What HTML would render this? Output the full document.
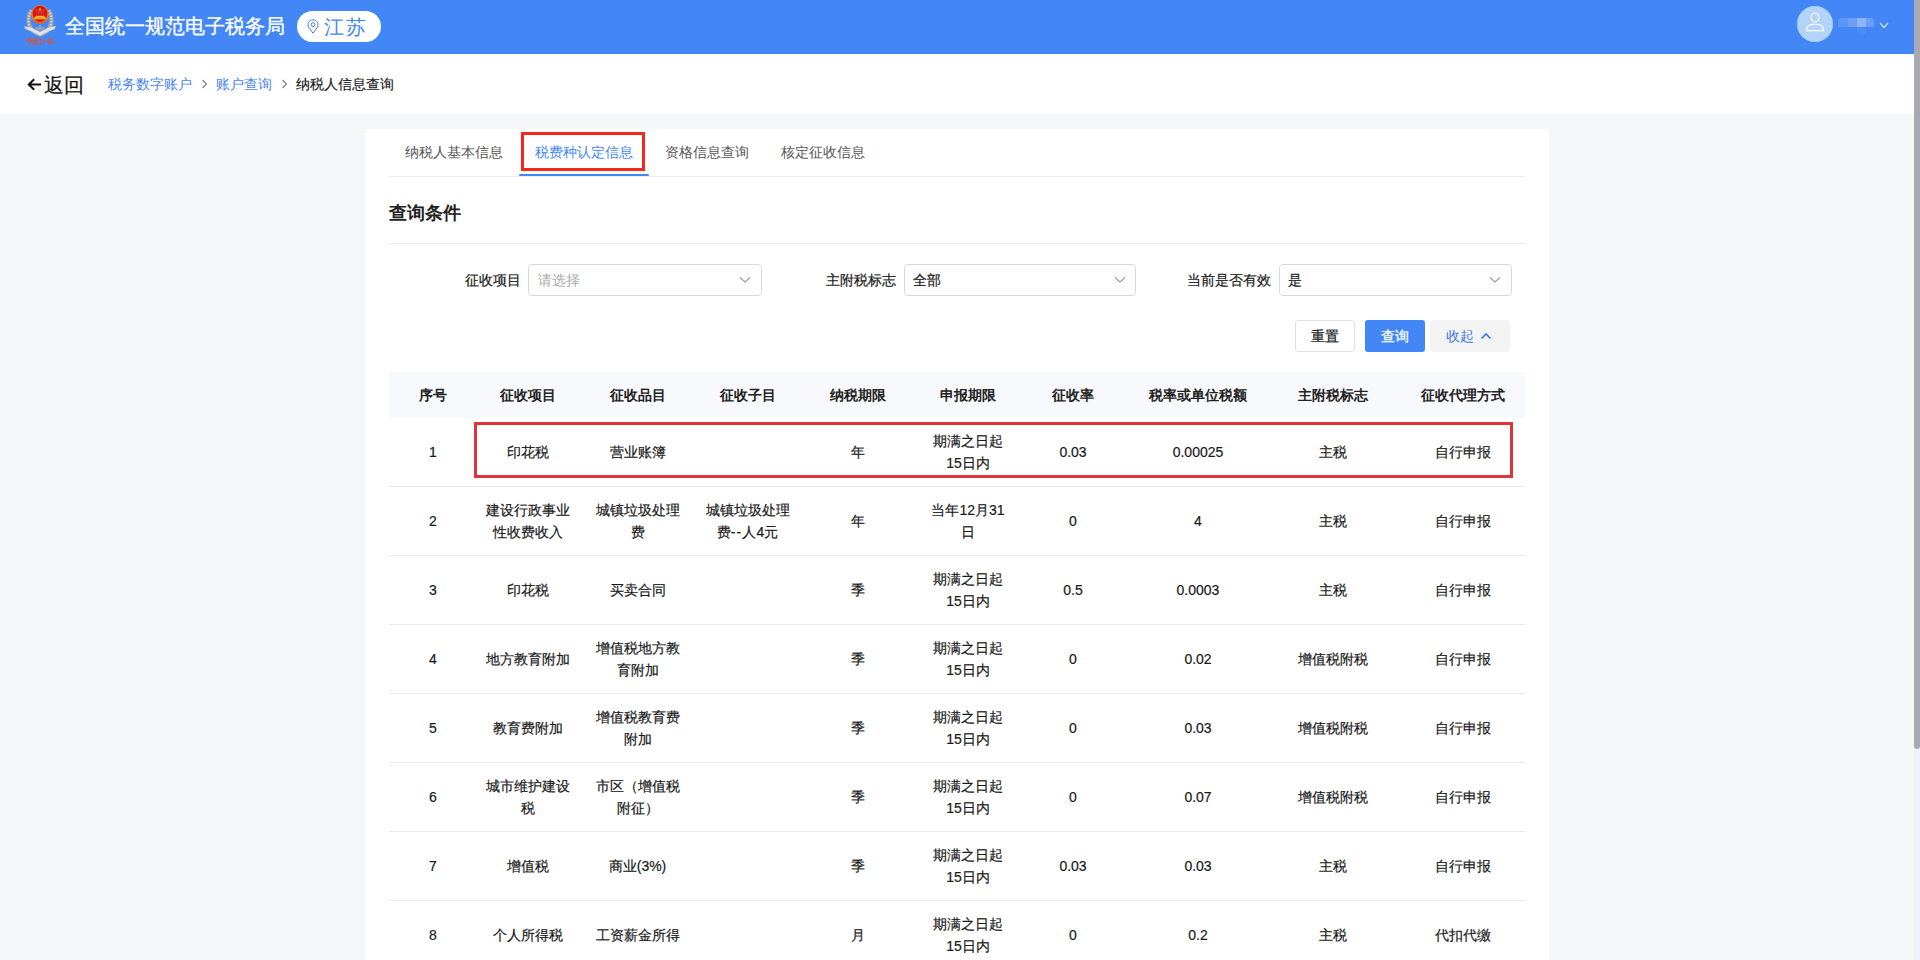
<!DOCTYPE html>
<html><head><meta charset="utf-8">
<style>
*{box-sizing:border-box;margin:0;padding:0}
html,body{width:1920px;height:960px;overflow:hidden}
body{font-family:"Liberation Sans",sans-serif;background:#f6f7f9;position:relative;color:#333;font-size:14px}
.abs{position:absolute}
#hdr{position:absolute;left:0;top:0;width:1914px;height:54px;background:#4387f6}
#crumb{position:absolute;left:0;top:54px;width:1914px;height:60px;background:#fff}
#card{position:absolute;left:365px;top:129px;width:1184px;height:831px;background:#fff}
#sb{position:absolute;left:1914px;top:0;width:6px;height:960px;background:#f1f2f9}
#thumb{position:absolute;left:0;top:0;width:6px;height:749px;background:#a8a9b1;border-radius:0 0 3px 3px}
.t{position:absolute;white-space:nowrap;line-height:20px}
#tbl{position:absolute;left:389px;top:372px;width:1136px;height:600px;overflow:hidden}
.thead{position:absolute;left:0;top:0;width:1136px;height:46px;background:#f8f9fd}
.th,.td{position:absolute;width:200px;display:flex;align-items:center;justify-content:center;text-align:center;white-space:nowrap}
.th{font-weight:bold;color:#222;font-size:14px;line-height:20px}
.td{color:#1a1a1a;font-size:14px;line-height:22px;-webkit-text-stroke:0.2px #1a1a1a}
.rline{position:absolute;left:0;width:1136px;height:1px;background:#e8e8e8}
.sel{position:absolute;top:264px;height:32px;border:1px solid #d9d9d9;border-radius:4px;background:#fff}
.lbl{position:absolute;top:270px;line-height:20px;font-size:14px;color:#1a1a1a;-webkit-text-stroke:0.2px #1a1a1a;white-space:nowrap}
.btn{position:absolute;top:320px;height:32px;border-radius:3px;font-size:14px;line-height:30px;text-align:center}
</style></head><body>
<div id="hdr">
  <svg class="abs" style="left:20px;top:0px" width="40" height="50" viewBox="0 0 40 50">
  <path d="M11.5 10.5 C8 14.5 7.5 23 10.5 28 C13 31.5 16.5 33.5 20 34.5 C23.5 33.5 27 31.5 29.5 28 C32.5 23 32 14.5 28.5 10.5" fill="none" stroke="#9fa2a8" stroke-width="4.2"/>
  <path d="M11.5 10.5 C8 14.5 7.5 23 10.5 28 C13 31.5 16.5 33.5 20 34.5 C23.5 33.5 27 31.5 29.5 28 C32.5 23 32 14.5 28.5 10.5" fill="none" stroke="#d6d8db" stroke-width="1.8" stroke-dasharray="1.4 1.4"/>
  <path d="M4.5 26.5 L11.5 27.8 L20 32 L28.5 27.8 L35.5 26 L34.5 29 L28.5 31.2 L20 35.8 L11.5 31.2 L5.5 29 Z" fill="#e2e3e5" stroke="#bfc2c6" stroke-width="0.5"/>
  <path d="M14 29 L20 25 L26 29 L20 31 Z" fill="#9ea1a6" opacity="0.8"/>
  <ellipse cx="20" cy="14.5" rx="8.8" ry="9.6" fill="#ee7f22"/>
  <ellipse cx="20" cy="13.8" rx="7.4" ry="8.1" fill="#d8161a"/>
  <circle cx="20" cy="9.6" r="1.1" fill="#ffe07a"/>
  <circle cx="16.6" cy="10.8" r="0.55" fill="#ffd84a"/>
  <circle cx="23.4" cy="10.8" r="0.55" fill="#ffd84a"/>
  <circle cx="18.3" cy="12.8" r="0.55" fill="#ffd84a"/>
  <circle cx="21.7" cy="12.8" r="0.55" fill="#ffd84a"/>
  <path d="M15 17.3 L25 17.3 L24.2 15.8 L15.8 15.8 Z" fill="#f7c52e"/>
  <path d="M14 17.3 H26 V19.3 H14 Z" fill="#f4b02c"/>
  <path d="M13.5 19.3 Q20 25 26.5 19.3 L26 21.5 Q20 25.5 14 21.5 Z" fill="#e65a1e"/>
  <g fill="none" stroke="#e6502e" stroke-width="1" stroke-linecap="round" opacity="0.9">
   <path d="M7.5 39 H11.5 V41.5 H7.5 Z M9.5 37.5 V46.5"/>
   <path d="M13.5 38.5 H17.5 V44.5 H13.5 Z M14.5 40.5 H16.5 M15.5 39.5 V43"/>
   <path d="M20.5 38.5 V44.5 M19.5 40 H22 M23 38.5 Q22.5 42 23.5 44.5"/>
   <path d="M25 41.5 H27.5 M29 39 H32.5 V43.5 H29 Z M30.5 38.5 V44"/>
  </g>
</svg>
  <div class="t" style="left:65px;top:15px;font-size:20px;line-height:22px;color:#fff;-webkit-text-stroke:0.35px #fff">全国统一规范电子税务局</div>
  <div class="abs" style="left:297px;top:11px;width:84px;height:31px;border-radius:16px;background:#fff"></div>
  <svg class="abs" style="left:307px;top:19px" width="12" height="15" viewBox="0 0 12 15"><path d="M6 14.2 L1.6 8.2 A5 5 0 1 1 10.4 8.2 Z" fill="none" stroke="#4a7fd8" stroke-width="1"/><circle cx="6" cy="5.6" r="1.9" fill="none" stroke="#4a7fd8" stroke-width="1"/></svg>
  <div class="t" style="left:324px;top:16px;font-size:20px;line-height:22px;color:#4387f6;letter-spacing:1.5px">江苏</div>
  <div class="abs" style="left:1797px;top:6px;width:36px;height:36px;border-radius:50%;background:#b4d3f9"></div>
  <svg class="abs" style="left:1797px;top:6px" width="36" height="36" viewBox="0 0 36 36"><ellipse cx="18" cy="11.4" rx="3.9" ry="4.4" fill="none" stroke="#fff" stroke-width="1.1"/><path d="M9.4 24.6 C9.4 19.5 13 18 18 18 C23 18 26.6 19.5 26.6 24.6 Z" fill="none" stroke="#fff" stroke-width="1.1"/></svg>
  <div class="abs" style="left:1838px;top:18px;width:10px;height:9px;background:#5e96f5;border-radius:4px 0 0 0"></div>
  <div class="abs" style="left:1848px;top:18px;width:9px;height:9px;background:#6d9ff6"></div>
  <div class="abs" style="left:1857px;top:18px;width:9px;height:9px;background:#8db5f8"></div>
  <div class="abs" style="left:1866px;top:18px;width:8px;height:9px;background:#6c9ef6;border-radius:0 4px 0 0"></div>
  <div class="abs" style="left:1857px;top:27px;width:9px;height:7px;background:#4b8cf5"></div>
  <svg class="abs" style="left:1878.5px;top:21.7px" width="10" height="7" viewBox="0 0 10 7"><path d="M1 1 L5 5.5 L9 1" fill="none" stroke="#fff" stroke-width="1.1"/></svg>
</div>
<div id="crumb">
  <svg class="abs" style="left:27px;top:24px" width="15" height="13" viewBox="0 0 15 13"><path d="M14 6.5 H2.5 M7.2 1.2 L1.8 6.5 L7.2 11.8" fill="none" stroke="#111" stroke-width="2"/></svg>
  <div class="t" style="left:44px;top:20px;font-size:20px;line-height:22px;color:#111;-webkit-text-stroke:0.2px #111">返回</div>
  <div class="t" style="left:108px;top:20px;font-size:14px;color:#4a84f5">税务数字账户</div>
  <svg class="abs" style="left:201px;top:25px" width="7" height="10" viewBox="0 0 7 10"><path d="M1.5 1 L5.5 5 L1.5 9" fill="none" stroke="#7a7a7a" stroke-width="1.1"/></svg>
  <div class="t" style="left:216px;top:20px;font-size:14px;color:#4a84f5">账户查询</div>
  <svg class="abs" style="left:281px;top:25px" width="7" height="10" viewBox="0 0 7 10"><path d="M1.5 1 L5.5 5 L1.5 9" fill="none" stroke="#7a7a7a" stroke-width="1.1"/></svg>
  <div class="t" style="left:296px;top:20px;font-size:14px;color:#1a1a1a;-webkit-text-stroke:0.15px #1a1a1a">纳税人信息查询</div>
</div>
<div id="card"></div>
<!-- tabs -->
<div class="t" style="left:405px;top:142px;color:#555">纳税人基本信息</div>
<div class="t" style="left:535px;top:142px;color:#4387f6">税费种认定信息</div>
<div class="t" style="left:665px;top:142px;color:#555">资格信息查询</div>
<div class="t" style="left:781px;top:142px;color:#555">核定征收信息</div>
<div class="abs" style="left:389px;top:176px;width:1136px;height:1px;background:#e8eaee"></div>
<div class="abs" style="left:519px;top:174px;width:130px;height:2px;background:#4387f6;border-radius:1px"></div>
<div class="abs" style="left:521px;top:132px;width:124px;height:39px;border:3px solid #f5281e"></div>
<!-- query title -->
<div class="t" style="left:389px;top:202px;font-size:18px;line-height:22px;font-weight:bold;color:#222">查询条件</div>
<div class="abs" style="left:389px;top:243px;width:1136px;height:1px;background:#e8e8e8"></div>
<!-- form -->
<div class="lbl" style="left:465px">征收项目</div>
<div class="sel" style="left:528px;width:234px"></div>
<div class="t" style="left:538px;top:270px;color:#aaa">请选择</div>
<div class="lbl" style="left:826px">主附税标志</div>
<div class="sel" style="left:904px;width:232px"></div>
<div class="t" style="left:913px;top:270px;color:#1a1a1a;-webkit-text-stroke:0.2px #1a1a1a">全部</div>
<div class="lbl" style="left:1187px">当前是否有效</div>
<div class="sel" style="left:1279px;width:233px"></div>
<div class="t" style="left:1288px;top:270px;color:#1a1a1a;-webkit-text-stroke:0.2px #1a1a1a">是</div>
<svg class="abs" style="left:739px;top:276px" width="12" height="8" viewBox="0 0 12 8"><path d="M1 1.5 L6 6 L11 1.5" fill="none" stroke="#999" stroke-width="1.1"/></svg>
<svg class="abs" style="left:1114px;top:276px" width="12" height="8" viewBox="0 0 12 8"><path d="M1 1.5 L6 6 L11 1.5" fill="none" stroke="#999" stroke-width="1.1"/></svg>
<svg class="abs" style="left:1489px;top:276px" width="12" height="8" viewBox="0 0 12 8"><path d="M1 1.5 L6 6 L11 1.5" fill="none" stroke="#999" stroke-width="1.1"/></svg>
<!-- buttons -->
<div class="btn" style="left:1295px;width:60px;border:1px solid #dcdfe6;color:#1a1a1a;background:#fff;-webkit-text-stroke:0.2px #1a1a1a">重置</div>
<div class="btn" style="left:1365px;width:60px;background:#4387f6;color:#fff;line-height:32px;-webkit-text-stroke:0.3px #fff">查询</div>
<div class="btn" style="left:1430px;width:80px;background:#f3f3f3;color:#4077e0;line-height:32px;text-align:left;padding-left:16px">收起</div>
<svg class="abs" style="left:1480px;top:332px" width="12" height="8" viewBox="0 0 12 8"><path d="M1.5 6.5 L6 2 L10.5 6.5" fill="none" stroke="#4077e0" stroke-width="1.6"/></svg>
<!-- table -->
<div id="tbl">
<div class="thead"></div>
<div class="th" style="left:-56.0px;top:0px;height:46px"><span>序号</span></div>
<div class="th" style="left:38.5px;top:0px;height:46px"><span>征收项目</span></div>
<div class="th" style="left:148.5px;top:0px;height:46px"><span>征收品目</span></div>
<div class="th" style="left:258.5px;top:0px;height:46px"><span>征收子目</span></div>
<div class="th" style="left:368.5px;top:0px;height:46px"><span>纳税期限</span></div>
<div class="th" style="left:479.0px;top:0px;height:46px"><span>申报期限</span></div>
<div class="th" style="left:584.0px;top:0px;height:46px"><span>征收率</span></div>
<div class="th" style="left:709.0px;top:0px;height:46px"><span>税率或单位税额</span></div>
<div class="th" style="left:844.0px;top:0px;height:46px"><span>主附税标志</span></div>
<div class="th" style="left:974.0px;top:0px;height:46px"><span>征收代理方式</span></div>
<div class="rline" style="top:114px"></div>
<div class="td" style="left:-56.0px;top:46px;height:68px"><span>1</span></div>
<div class="td" style="left:38.5px;top:46px;height:68px"><span>印花税</span></div>
<div class="td" style="left:148.5px;top:46px;height:68px"><span>营业账簿</span></div>
<div class="td" style="left:368.5px;top:46px;height:68px"><span>年</span></div>
<div class="td" style="left:479.0px;top:46px;height:68px"><span>期满之日起<br>15日内</span></div>
<div class="td" style="left:584.0px;top:46px;height:68px"><span>0.03</span></div>
<div class="td" style="left:709.0px;top:46px;height:68px"><span>0.00025</span></div>
<div class="td" style="left:844.0px;top:46px;height:68px"><span>主税</span></div>
<div class="td" style="left:974.0px;top:46px;height:68px"><span>自行申报</span></div>
<div class="rline" style="top:183px"></div>
<div class="td" style="left:-56.0px;top:115px;height:68px"><span>2</span></div>
<div class="td" style="left:38.5px;top:115px;height:68px"><span>建设行政事业<br>性收费收入</span></div>
<div class="td" style="left:148.5px;top:115px;height:68px"><span>城镇垃圾处理<br>费</span></div>
<div class="td" style="left:258.5px;top:115px;height:68px"><span>城镇垃圾处理<br>费<span style='letter-spacing:1.2px'>--</span>人4元</span></div>
<div class="td" style="left:368.5px;top:115px;height:68px"><span>年</span></div>
<div class="td" style="left:479.0px;top:115px;height:68px"><span>当年12月31<br>日</span></div>
<div class="td" style="left:584.0px;top:115px;height:68px"><span>0</span></div>
<div class="td" style="left:709.0px;top:115px;height:68px"><span>4</span></div>
<div class="td" style="left:844.0px;top:115px;height:68px"><span>主税</span></div>
<div class="td" style="left:974.0px;top:115px;height:68px"><span>自行申报</span></div>
<div class="rline" style="top:252px"></div>
<div class="td" style="left:-56.0px;top:184px;height:68px"><span>3</span></div>
<div class="td" style="left:38.5px;top:184px;height:68px"><span>印花税</span></div>
<div class="td" style="left:148.5px;top:184px;height:68px"><span>买卖合同</span></div>
<div class="td" style="left:368.5px;top:184px;height:68px"><span>季</span></div>
<div class="td" style="left:479.0px;top:184px;height:68px"><span>期满之日起<br>15日内</span></div>
<div class="td" style="left:584.0px;top:184px;height:68px"><span>0.5</span></div>
<div class="td" style="left:709.0px;top:184px;height:68px"><span>0.0003</span></div>
<div class="td" style="left:844.0px;top:184px;height:68px"><span>主税</span></div>
<div class="td" style="left:974.0px;top:184px;height:68px"><span>自行申报</span></div>
<div class="rline" style="top:321px"></div>
<div class="td" style="left:-56.0px;top:253px;height:68px"><span>4</span></div>
<div class="td" style="left:38.5px;top:253px;height:68px"><span>地方教育附加</span></div>
<div class="td" style="left:148.5px;top:253px;height:68px"><span>增值税地方教<br>育附加</span></div>
<div class="td" style="left:368.5px;top:253px;height:68px"><span>季</span></div>
<div class="td" style="left:479.0px;top:253px;height:68px"><span>期满之日起<br>15日内</span></div>
<div class="td" style="left:584.0px;top:253px;height:68px"><span>0</span></div>
<div class="td" style="left:709.0px;top:253px;height:68px"><span>0.02</span></div>
<div class="td" style="left:844.0px;top:253px;height:68px"><span>增值税附税</span></div>
<div class="td" style="left:974.0px;top:253px;height:68px"><span>自行申报</span></div>
<div class="rline" style="top:390px"></div>
<div class="td" style="left:-56.0px;top:322px;height:68px"><span>5</span></div>
<div class="td" style="left:38.5px;top:322px;height:68px"><span>教育费附加</span></div>
<div class="td" style="left:148.5px;top:322px;height:68px"><span>增值税教育费<br>附加</span></div>
<div class="td" style="left:368.5px;top:322px;height:68px"><span>季</span></div>
<div class="td" style="left:479.0px;top:322px;height:68px"><span>期满之日起<br>15日内</span></div>
<div class="td" style="left:584.0px;top:322px;height:68px"><span>0</span></div>
<div class="td" style="left:709.0px;top:322px;height:68px"><span>0.03</span></div>
<div class="td" style="left:844.0px;top:322px;height:68px"><span>增值税附税</span></div>
<div class="td" style="left:974.0px;top:322px;height:68px"><span>自行申报</span></div>
<div class="rline" style="top:459px"></div>
<div class="td" style="left:-56.0px;top:391px;height:68px"><span>6</span></div>
<div class="td" style="left:38.5px;top:391px;height:68px"><span>城市维护建设<br>税</span></div>
<div class="td" style="left:148.5px;top:391px;height:68px"><span>市区（增值税<br>附征）</span></div>
<div class="td" style="left:368.5px;top:391px;height:68px"><span>季</span></div>
<div class="td" style="left:479.0px;top:391px;height:68px"><span>期满之日起<br>15日内</span></div>
<div class="td" style="left:584.0px;top:391px;height:68px"><span>0</span></div>
<div class="td" style="left:709.0px;top:391px;height:68px"><span>0.07</span></div>
<div class="td" style="left:844.0px;top:391px;height:68px"><span>增值税附税</span></div>
<div class="td" style="left:974.0px;top:391px;height:68px"><span>自行申报</span></div>
<div class="rline" style="top:528px"></div>
<div class="td" style="left:-56.0px;top:460px;height:68px"><span>7</span></div>
<div class="td" style="left:38.5px;top:460px;height:68px"><span>增值税</span></div>
<div class="td" style="left:148.5px;top:460px;height:68px"><span>商业(3%)</span></div>
<div class="td" style="left:368.5px;top:460px;height:68px"><span>季</span></div>
<div class="td" style="left:479.0px;top:460px;height:68px"><span>期满之日起<br>15日内</span></div>
<div class="td" style="left:584.0px;top:460px;height:68px"><span>0.03</span></div>
<div class="td" style="left:709.0px;top:460px;height:68px"><span>0.03</span></div>
<div class="td" style="left:844.0px;top:460px;height:68px"><span>主税</span></div>
<div class="td" style="left:974.0px;top:460px;height:68px"><span>自行申报</span></div>
<div class="rline" style="top:597px"></div>
<div class="td" style="left:-56.0px;top:529px;height:68px"><span>8</span></div>
<div class="td" style="left:38.5px;top:529px;height:68px"><span>个人所得税</span></div>
<div class="td" style="left:148.5px;top:529px;height:68px"><span>工资薪金所得</span></div>
<div class="td" style="left:368.5px;top:529px;height:68px"><span>月</span></div>
<div class="td" style="left:479.0px;top:529px;height:68px"><span>期满之日起<br>15日内</span></div>
<div class="td" style="left:584.0px;top:529px;height:68px"><span>0</span></div>
<div class="td" style="left:709.0px;top:529px;height:68px"><span>0.2</span></div>
<div class="td" style="left:844.0px;top:529px;height:68px"><span>主税</span></div>
<div class="td" style="left:974.0px;top:529px;height:68px"><span>代扣代缴</span></div>
</div>
<div class="abs" style="left:474px;top:422px;width:1039px;height:56px;border:3px solid #e0343c"></div>
<div id="sb"><div id="thumb"></div></div>
</body></html>
